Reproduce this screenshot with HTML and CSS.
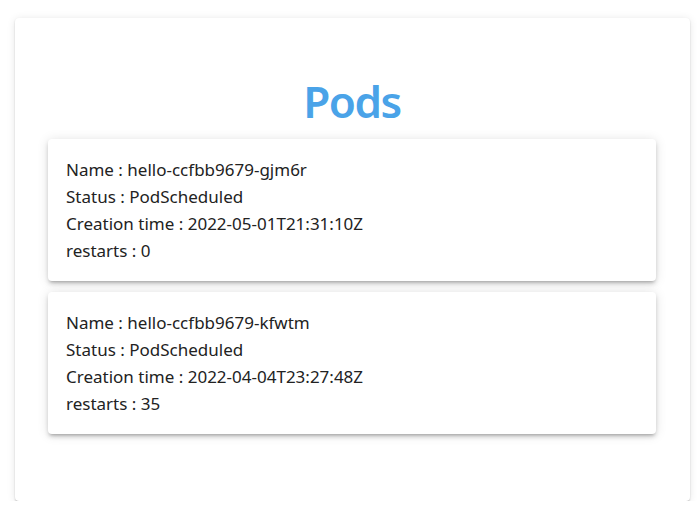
FILE: index.html
```html
<!DOCTYPE html>
<html lang="en">
<head>
<meta charset="utf-8">
<title>Pods</title>
<link rel="stylesheet" href="styles.css">
</head>
<body>
<main class="panel">
  <h1 class="title">Pods</h1>
  <section class="list">
    <article class="pod">
      <p>Name : hello-ccfbb9679-gjm6r</p>
      <p>Status : PodScheduled</p>
      <p>Creation time : 2022-05-01T21:31:10Z</p>
      <p>restarts : 0</p>
    </article>
    <article class="pod">
      <p>Name : hello-ccfbb9679-kfwtm</p>
      <p>Status : PodScheduled</p>
      <p>Creation time : 2022-04-04T23:27:48Z</p>
      <p>restarts : 35</p>
    </article>
  </section>
</main>
</body>
</html>
```
FILE: styles.css
```css
html, body {
  margin: 0;
  padding: 0;
  background: #ffffff;
}
body {
  padding: 18px 7px 0 15px;
  font-family: "Noto Sans", "Open Sans", sans-serif;
  color: #222222;
}
.panel {
  background: #ffffff;
  border-radius: 4px;
  box-shadow: 0px 2px 2px -1px rgba(0,0,0,0.2), 0px 1px 2px 0px rgba(0,0,0,0.14), 0px 1px 8px 0px rgba(0,0,0,0.10);
  padding: 55px 34px 67px 33px;
  display: flex;
  flex-direction: column;
}
.title {
  margin: 0 0 10px;
  text-align: center;
  font-size: 44px;
  line-height: 56px;
  letter-spacing: -1.5px;
  font-weight: 600;
  color: #4aa3e8;
}
.list {
  display: flex;
  flex-direction: column;
  gap: 11px;
}
.pod {
  background: #ffffff;
  border-radius: 4px;
  padding: 17px 18px;
  box-shadow: 0px 3px 3px -2px rgba(0,0,0,0.2), 0px 3px 4px 0px rgba(0,0,0,0.14), 0px 1px 12px 0px rgba(0,0,0,0.12);
}
.pod p {
  margin: 0;
  font-size: 17px;
  line-height: 27px;
}
```
